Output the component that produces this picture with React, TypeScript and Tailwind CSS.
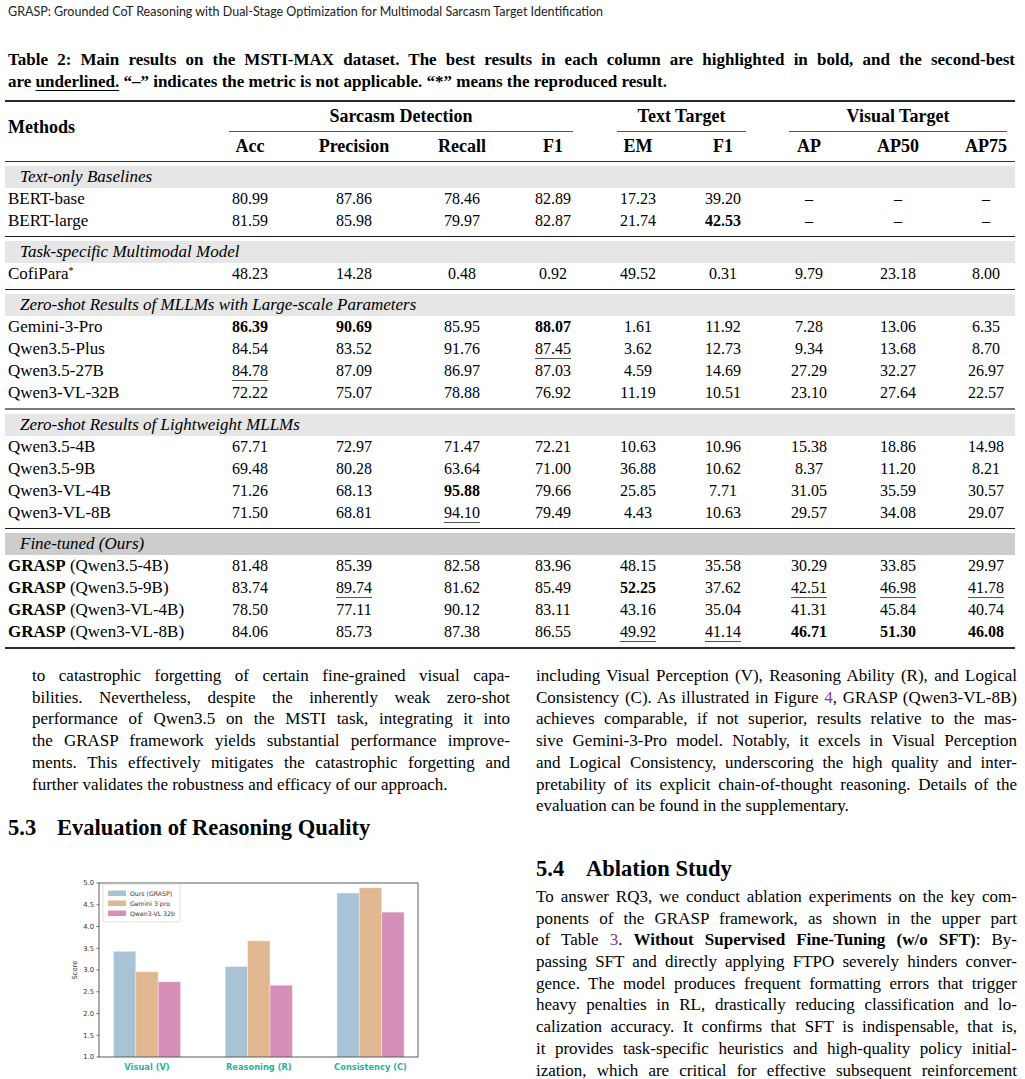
import type { ReactNode } from 'react';

const colW = [
  'w-[80px]',
  'w-[128px]',
  'w-[88px]',
  'w-[94px]',
  'w-[76px]',
  'w-[94px]',
  'w-[78px]',
  'w-[100px]',
  'w-[67px] pl-[9px]',
];

const subHeads = ['Acc', 'Precision', 'Recall', 'F1', 'EM', 'F1', 'AP', 'AP50', 'AP75'];

type Section = { title: string; bg: string; rule: string; rows: [string, string[]][] };

// ** = best (bold), __ = second best (underline)
const sections: Section[] = [
  {
    title: 'Text-only Baselines',
    bg: 'bg-[#e6e6e6]',
    rule: 'h-px bg-[#1a1a1a]',
    rows: [
      ['BERT-base', ['80.99', '87.86', '78.46', '82.89', '17.23', '39.20', '–', '–', '–']],
      ['BERT-large', ['81.59', '85.98', '79.97', '82.87', '21.74', '**42.53', '–', '–', '–']],
    ],
  },
  {
    title: 'Task-specific Multimodal Model',
    bg: 'bg-[#e6e6e6]',
    rule: 'h-px bg-[#1a1a1a]',
    rows: [['CofiPara*', ['48.23', '14.28', '0.48', '0.92', '49.52', '0.31', '9.79', '23.18', '8.00']]],
  },
  {
    title: 'Zero-shot Results of MLLMs with Large-scale Parameters',
    bg: 'bg-[#e6e6e6]',
    rule: 'h-[2px] bg-[#7a7a7a]',
    rows: [
      ['Gemini-3-Pro', ['**86.39', '**90.69', '85.95', '**88.07', '1.61', '11.92', '7.28', '13.06', '6.35']],
      ['Qwen3.5-Plus', ['84.54', '83.52', '91.76', '__87.45', '3.62', '12.73', '9.34', '13.68', '8.70']],
      ['Qwen3.5-27B', ['__84.78', '87.09', '86.97', '87.03', '4.59', '14.69', '27.29', '32.27', '26.97']],
      ['Qwen3-VL-32B', ['72.22', '75.07', '78.88', '76.92', '11.19', '10.51', '23.10', '27.64', '22.57']],
    ],
  },
  {
    title: 'Zero-shot Results of Lightweight MLLMs',
    bg: 'bg-[#e6e6e6]',
    rule: 'h-px bg-[#1a1a1a]',
    rows: [
      ['Qwen3.5-4B', ['67.71', '72.97', '71.47', '72.21', '10.63', '10.96', '15.38', '18.86', '14.98']],
      ['Qwen3.5-9B', ['69.48', '80.28', '63.64', '71.00', '36.88', '10.62', '8.37', '11.20', '8.21']],
      ['Qwen3-VL-4B', ['71.26', '68.13', '**95.88', '79.66', '25.85', '7.71', '31.05', '35.59', '30.57']],
      ['Qwen3-VL-8B', ['71.50', '68.81', '__94.10', '79.49', '4.43', '10.63', '29.57', '34.08', '29.07']],
    ],
  },
  {
    title: 'Fine-tuned (Ours)',
    bg: 'bg-[#cdcdcd]',
    rule: 'h-[2px] bg-[#2a2a2a]',
    rows: [
      ['GRASP (Qwen3.5-4B)', ['81.48', '85.39', '82.58', '83.96', '48.15', '35.58', '30.29', '33.85', '29.97']],
      ['GRASP (Qwen3.5-9B)', ['83.74', '__89.74', '81.62', '85.49', '**52.25', '37.62', '__42.51', '__46.98', '__41.78']],
      ['GRASP (Qwen3-VL-4B)', ['78.50', '77.11', '90.12', '83.11', '43.16', '35.04', '41.31', '45.84', '40.74']],
      ['GRASP (Qwen3-VL-8B)', ['84.06', '85.73', '87.38', '86.55', '__49.92', '__41.14', '**46.71', '**51.30', '**46.08']],
    ],
  },
];

function Cell({ v }: { v: string }) {
  if (v.startsWith('**')) return <span className="font-bold">{v.slice(2)}</span>;
  if (v.startsWith('__'))
    return (
      <span className="underline decoration-[#555] decoration-[1px] underline-offset-[4px]">{v.slice(2)}</span>
    );
  return <span>{v}</span>;
}

function MethodName({ name }: { name: string }) {
  if (name.startsWith('GRASP ')) {
    return (
      <>
        <span className="font-bold">GRASP</span>
        {name.slice(5)}
      </>
    );
  }
  if (name.endsWith('*')) {
    return (
      <>
        {name.slice(0, -1)}
        <sup className="text-[10px]">*</sup>
      </>
    );
  }
  return <>{name}</>;
}

function ResultsTable() {
  return (
    <div className="ml-[5px] w-[1010px] mt-[7px]">
      <div className="h-[2px] bg-[#2a2a2a]" />
      {/* Header */}
      <div className="flex">
        <div className="w-[205px] pl-[3px] pb-[8px] flex items-center text-[18px] font-bold">Methods</div>
        <div className="flex flex-col">
          <div className="flex h-[29px] items-center text-[18px] font-bold">
            <div className="w-[390px] pl-[19px] pr-[27px] text-center">Sarcasm Detection</div>
            <div className="w-[170px] pl-[17px] pr-[24px] text-center">Text Target</div>
            <div className="w-[245px] pl-[19px] pr-[8px] text-center">Visual Target</div>
          </div>
          <div className="flex h-px">
            <div className="w-[390px] pl-[19px] pr-[27px]">
              <div className="h-px bg-[#555]" />
            </div>
            <div className="w-[170px] pl-[17px] pr-[24px]">
              <div className="h-px bg-[#555]" />
            </div>
            <div className="w-[245px] pl-[19px] pr-[8px]">
              <div className="h-px bg-[#555]" />
            </div>
          </div>
          <div className="flex h-[29px] items-center text-[18px] font-bold">
            {subHeads.map((h, i) => (
              <div key={i} className={`${colW[i]} text-center`}>
                {h}
              </div>
            ))}
          </div>
        </div>
      </div>
      <div className="h-px bg-[#333]" />

      {sections.map((s) => (
        <div key={s.title}>
          <div className="pt-[4px] pb-[4px]">
            <div className={`h-[22px] flex items-center pl-[15px] italic text-[17px] ${s.bg}`}>{s.title}</div>
            {s.rows.map(([name, vals]) => (
              <div key={name} className="flex h-[22px] items-center">
                <div className="w-[205px] pl-[3px] text-[17px] whitespace-nowrap">
                  <MethodName name={name} />
                </div>
                {vals.map((v, i) => (
                  <div key={i} className={`${colW[i]} text-center text-[16px]`}>
                    <Cell v={v} />
                  </div>
                ))}
              </div>
            ))}
          </div>
          <div className={s.rule} />
        </div>
      ))}
    </div>
  );
}

function Lines({ lines, last = true }: { lines: ReactNode[]; last?: boolean }) {
  return (
    <div className="text-[17px] leading-[21.7px]">
      {lines.map((l, i) => (
        <div
          key={i}
          className={i === lines.length - 1 && last ? 'whitespace-nowrap' : 'text-justify [text-align-last:justify]'}
        >
          {l}
        </div>
      ))}
    </div>
  );
}

const ref = 'text-[#7e3b8c]';

function ScoreChart() {
  const groups = [
    { label: 'Visual (V)', v: [3.43, 2.96, 2.73] },
    { label: 'Reasoning (R)', v: [3.08, 3.67, 2.65] },
    { label: 'Consistency (C)', v: [4.77, 4.89, 4.33] },
  ];
  const colors = ['#a9c3d6', '#e0b791', '#d58fb9'];
  const y = (v: number) => 187 - (v - 1) * 43.5;
  const ticks = [1, 1.5, 2, 2.5, 3, 3.5, 4, 4.5, 5];
  const bw = 22.4;
  return (
    <svg width="360" height="209" viewBox="0 0 360 209" className="ml-[52px] mt-[28px] block">
      {groups.map((g, gi) => {
        const c = 87 + gi * 111.75;
        return (
          <g key={g.label}>
            {g.v.map((v, i) => (
              <rect
                key={i}
                x={c - 1.5 * bw + i * bw}
                y={y(v)}
                width={bw}
                height={187 - y(v)}
                fill={colors[i]}
                stroke="#fff"
                strokeOpacity="0.45"
                strokeWidth="0.8"
              />
            ))}
            <text
              x={c}
              y={200}
              textAnchor="middle"
              fontSize="8.3"
              fontWeight="bold"
              fill="#27b39c"
              fontFamily="DejaVu Sans, sans-serif"
            >
              {g.label}
            </text>
          </g>
        );
      })}
      <rect x="39" y="13" width="319" height="174" fill="none" stroke="#333" strokeWidth="0.8" />
      {ticks.map((t) => (
        <g key={t}>
          <line x1="36.5" x2="39" y1={y(t)} y2={y(t)} stroke="#333" strokeWidth="0.7" />
          <text
            x="34"
            y={y(t) + 2.4}
            textAnchor="end"
            fontSize="6.8"
            fill="#333"
            fontFamily="DejaVu Sans, sans-serif"
          >
            {t.toFixed(1)}
          </text>
        </g>
      ))}
      <text
        x="17"
        y="100"
        transform="rotate(-90 17 100)"
        textAnchor="middle"
        fontSize="6.8"
        fill="#333"
        fontFamily="DejaVu Sans, sans-serif"
      >
        Score
      </text>
      {/* Legend */}
      <rect x="43" y="14" width="77" height="38" rx="2" fill="#fff" fillOpacity="0.85" stroke="#d0d0d0" strokeWidth="0.7" />
      {['Ours (GRASP)', 'Gemini 3 pro', 'Qwen3-VL 32b'].map((l, i) => (
        <g key={l}>
          <rect x="48" y={20.5 + i * 10} width="18" height="5.5" fill={colors[i]} />
          <text x="70" y={25.5 + i * 10} fontSize="6.2" fill="#333" fontFamily="DejaVu Sans, sans-serif">
            {l}
          </text>
        </g>
      ))}
    </svg>
  );
}

export default function App() {
  return (
    <div className="w-[1025px] h-[1079px] overflow-hidden bg-white text-black font-['Liberation_Serif','Times_New_Roman',serif]">
      {/* Running header */}
      <div className="pt-[4px] pl-[8px] text-[12.5px] leading-[16px] text-[#222] font-['Lato',sans-serif]">
        GRASP: Grounded CoT Reasoning with Dual-Stage Optimization for Multimodal Sarcasm Target Identification
      </div>

      {/* Caption */}
      <div className="mt-[29px] pl-[8px] w-[1015px] text-[17px] leading-[22px] font-bold">
        <div className="text-justify [text-align-last:justify]">
          Table 2: Main results on the MSTI-MAX dataset. The best results in each column are highlighted in bold, and
          the second-best
        </div>
        <div>
          are <span className="underline underline-offset-[3px] decoration-[1px]">underlined.</span> “–” indicates the
          metric is not applicable. “*” means the reproduced result.
        </div>
      </div>

      <ResultsTable />

      <div className="flex mt-[16px]">
        {/* Left column */}
        <div className="w-[510px] pl-[8px] shrink-0">
          <div className="pl-[24px]">
            <Lines
              lines={[
                'to catastrophic forgetting of certain fine-grained visual capa-',
                'bilities. Nevertheless, despite the inherently weak zero-shot',
                'performance of Qwen3.5 on the MSTI task, integrating it into',
                'the GRASP framework yields substantial performance improve-',
                'ments. This effectively mitigates the catastrophic forgetting and',
                'further validates the robustness and efficacy of our approach.',
              ]}
            />
          </div>
          <h2 className="mt-[19px] text-[22.5px] leading-[28px] font-bold flex">
            <span className="w-[49px]">5.3</span>
            <span>Evaluation of Reasoning Quality</span>
          </h2>
          <ScoreChart />
        </div>

        {/* Right column */}
        <div className="ml-[26px] w-[481px] shrink-0">
          <Lines
            lines={[
              'including Visual Perception (V), Reasoning Ability (R), and Logical',
              <>
                Consistency (C). As illustrated in Figure <span className={ref}>4</span>, GRASP (Qwen3-VL-8B)
              </>,
              'achieves comparable, if not superior, results relative to the mas-',
              'sive Gemini-3-Pro model. Notably, it excels in Visual Perception',
              'and Logical Consistency, underscoring the high quality and inter-',
              'pretability of its explicit chain-of-thought reasoning. Details of the',
              'evaluation can be found in the supplementary.',
            ]}
          />
          <h2 className="mt-[38px] text-[22.5px] leading-[28px] font-bold flex">
            <span className="w-[50px]">5.4</span>
            <span>Ablation Study</span>
          </h2>
          <div className="mt-[3px]">
            <Lines
              last={false}
              lines={[
                'To answer RQ3, we conduct ablation experiments on the key com-',
                'ponents of the GRASP framework, as shown in the upper part',
                <>
                  of Table <span className={ref}>3</span>.{' '}
                  <span className="font-bold">Without Supervised Fine-Tuning (w/o SFT)</span>: By-
                </>,
                'passing SFT and directly applying FTPO severely hinders conver-',
                'gence. The model produces frequent formatting errors that trigger',
                'heavy penalties in RL, drastically reducing classification and lo-',
                'calization accuracy. It confirms that SFT is indispensable, that is,',
                'it provides task-specific heuristics and high-quality policy initial-',
                'ization, which are critical for effective subsequent reinforcement',
              ]}
            />
          </div>
        </div>
      </div>
    </div>
  );
}
